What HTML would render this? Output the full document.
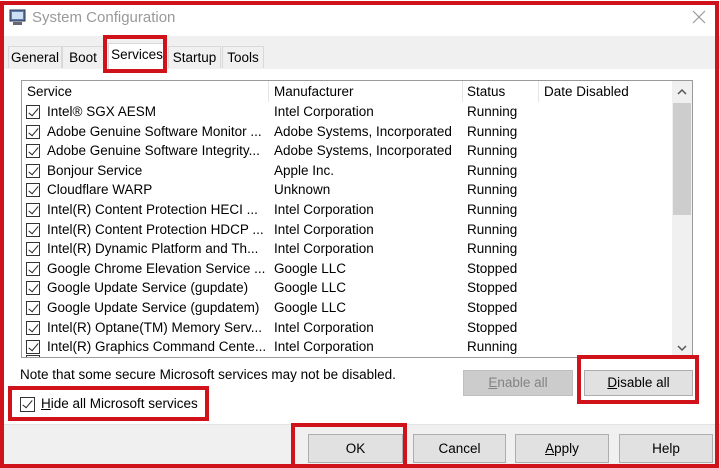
<!DOCTYPE html><html><head><style>
*{box-sizing:border-box;margin:0;padding:0}
body{width:720px;height:468px;background:#fff;font-family:"Liberation Sans",sans-serif;font-size:13.5px;color:#000;position:relative;overflow:hidden}
.a{position:absolute}
.red{position:absolute;border:4px solid #d0121b}
.tab{position:absolute;top:46px;height:22px;border:1px solid #d9d9d9;border-bottom:none;background:#f0f0f0;padding:3px 0 0;text-align:center;font-size:13.5px}
.row{position:absolute;left:22px;width:650px;height:19.6px;line-height:19.6px;white-space:nowrap}
.row span{position:absolute}
.cb{position:absolute;width:14px;height:14px;border:1px solid #333;background:#fff}
.cb.k:after{content:"";position:absolute;left:4px;top:0px;width:4px;height:9px;border:solid #222;border-width:0 1.5px 1.5px 0;transform:rotate(40deg)}
.btn{position:absolute;border:1px solid #adadad;background:#e1e1e1;text-align:center;font-size:13.5px}
</style></head><body>
<div class="a" style="left:0;top:36px;width:720px;height:33px;background:#f0f0f0"></div>
<div class="a" style="left:0;top:424px;width:720px;height:44px;background:#f0f0f0;border-top:1px solid #e3e3e3"></div>
<svg class="a" style="left:9px;top:9px" width="18" height="17"><rect x="1" y="1" width="15" height="11" fill="#5a7fb5" stroke="#334"/><rect x="3" y="3" width="11" height="7" fill="#cfe0f5"/><rect x="4" y="13" width="9" height="3" fill="#667"/></svg>
<div class="a" style="left:32px;top:9px;font-size:15px;color:#999">System Configuration</div>
<svg class="a" style="left:692px;top:10px" width="14" height="14"><path d="M1 1L13 13M13 1L1 13" stroke="#999" stroke-width="1.2"/></svg>
<div class="tab" style="left:8px;width:54px">General</div>
<div class="tab" style="left:62px;width:42px">Boot</div>
<div class="tab" style="left:108px;width:58px;top:43px;height:26px;background:#fff">Services</div>
<div class="tab" style="left:168px;width:53px">Startup</div>
<div class="tab" style="left:222px;width:42px">Tools</div>
<div class="a" style="left:21px;top:80px;width:672px;height:278px;border:1px solid #9a9a9a;background:#fff"></div>
<div class="a" style="left:268px;top:81px;width:1px;height:21px;background:#e5e5e5"></div>
<div class="a" style="left:462px;top:81px;width:1px;height:21px;background:#e5e5e5"></div>
<div class="a" style="left:538px;top:81px;width:1px;height:21px;background:#e5e5e5"></div>
<div class="row" style="top:82px"><span style="left:5px">Service</span><span style="left:252px">Manufacturer</span><span style="left:445px">Status</span><span style="left:522px">Date Disabled</span></div>
<div class="a" style="left:672px;top:81px;width:20px;height:276px;background:#f0f0f0"></div>
<div class="a" style="left:673px;top:103px;width:18px;height:112px;background:#cdcdcd"></div>
<svg class="a" style="left:677px;top:88px" width="10" height="7"><path d="M1 6L5 2L9 6" fill="none" stroke="#555" stroke-width="1.5"/></svg>
<svg class="a" style="left:677px;top:345px" width="10" height="7"><path d="M1 1L5 5L9 1" fill="none" stroke="#555" stroke-width="1.5"/></svg>
<div id="rows"></div>
<script>
var d=[["Intel® SGX AESM","Intel Corporation","Running"],["Adobe Genuine Software Monitor ...","Adobe Systems, Incorporated","Running"],["Adobe Genuine Software Integrity...","Adobe Systems, Incorporated","Running"],["Bonjour Service","Apple Inc.","Running"],["Cloudflare WARP","Unknown","Running"],["Intel(R) Content Protection HECI ...","Intel Corporation","Running"],["Intel(R) Content Protection HDCP ...","Intel Corporation","Running"],["Intel(R) Dynamic Platform and Th...","Intel Corporation","Running"],["Google Chrome Elevation Service ...","Google LLC","Stopped"],["Google Update Service (gupdate)","Google LLC","Stopped"],["Google Update Service (gupdatem)","Google LLC","Stopped"],["Intel(R) Optane(TM) Memory Serv...","Intel Corporation","Stopped"],["Intel(R) Graphics Command Cente...","Intel Corporation","Running"]];
var h="";d.forEach(function(r,i){var t=102+i*19.6;h+='<div class="row" style="top:'+t+'px"><div class="cb k" style="left:4px;top:3px"></div><span style="left:25px">'+r[0]+'</span><span style="left:252px">'+r[1]+'</span><span style="left:445px">'+r[2]+'</span></div>';});
h+='<div style="position:absolute;left:26px;top:355px;width:14px;height:2px;border:1px solid #333;border-bottom:none"></div>';
document.getElementById("rows").innerHTML=h;
</script>
<div class="a" style="left:20px;top:367px">Note that some secure Microsoft services may not be disabled.</div>
<div class="btn" style="left:463px;top:370px;width:110px;height:26px;line-height:24px;background:#ccc;border-color:#bfbfbf;color:#838383"><u>E</u>nable all</div>
<div class="btn" style="left:584px;top:370px;width:109px;height:26px;line-height:24px"><u>D</u>isable all</div>
<div class="cb k" style="left:20px;top:397px;width:15px;height:15px"></div>
<div class="a" style="left:41px;top:396px"><u>H</u>ide all Microsoft services</div>
<div class="btn" style="left:308px;top:434px;width:95px;height:29px;line-height:27px">OK</div>
<div class="btn" style="left:413px;top:434px;width:93px;height:29px;line-height:27px">Cancel</div>
<div class="btn" style="left:515px;top:434px;width:94px;height:29px;line-height:27px"><u>A</u>pply</div>
<div class="btn" style="left:619px;top:434px;width:94px;height:29px;line-height:27px">Help</div>
<div class="red" style="left:0;top:1px;width:719px;height:467px"></div>
<div class="red" style="left:103px;top:35px;width:64px;height:38px"></div>
<div class="red" style="left:577px;top:355px;width:122px;height:49px"></div>
<div class="red" style="left:8px;top:386px;width:201px;height:35px"></div>
<div class="red" style="left:291px;top:423px;width:116px;height:45px"></div>
</body></html>
